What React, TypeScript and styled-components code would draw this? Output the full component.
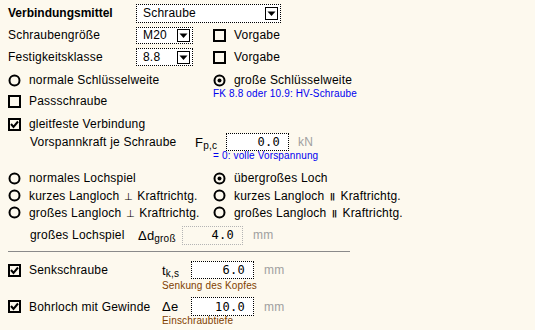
import React from "react";
import styled, { createGlobalStyle } from "styled-components";

const Global = createGlobalStyle`
  html, body { margin: 0; padding: 0; background: #fdf9ee; }
  body { width: 535px; height: 330px; overflow: hidden; }
`;

const Page = styled.div`
  display: flex;
  flex-direction: column;
  padding: 3px 8px 0 8px;
  font-family: "Liberation Sans", Arial, sans-serif;
  font-size: 12px;
  letter-spacing: 0.2px;
  color: #000;
  background: #fdf9ee;
  height: 330px;
  box-sizing: border-box;
`;

const Row = styled.div<{ $h: number; $mt?: number; $indent?: number }>`
  display: flex;
  align-items: center;
  height: ${(p) => p.$h}px;
  margin-top: ${(p) => p.$mt ?? 0}px;
  padding-left: ${(p) => p.$indent ?? 0}px;
  white-space: nowrap;
`;

const Split = styled.div<{ $h: number }>`
  display: grid;
  grid-template-columns: 205px 1fr;
  height: ${(p) => p.$h}px;
`;

const Cell = styled.div<{ $w: number }>`
  display: flex;
  align-items: center;
  width: ${(p) => p.$w}px;
  flex-shrink: 0;
`;

const Bold = styled.span`
  font-weight: bold;
  letter-spacing: 0;
`;

const SelectBox = styled.div<{ $w: number; $h: number }>`
  width: ${(p) => p.$w}px;
  height: ${(p) => p.$h}px;
  box-sizing: border-box;
  border: 1px dotted #000;
  background: #fff;
  display: flex;
  align-items: center;
  justify-content: space-between;
  padding: 0 2px 0 6px;
`;

const DropBtn = styled.svg`
  display: block;
  flex-shrink: 0;
`;

const Drop = () => (
  <DropBtn width="13" height="13" viewBox="0 0 13 13">
    <rect x="0.5" y="0.5" width="12" height="12" fill="#fff" stroke="#000" />
    <polygon points="2.5,4.5 10.5,4.5 6.5,9" fill="#000" />
  </DropBtn>
);

const OptionWrap = styled.label`
  display: flex;
  align-items: center;
  gap: 8px;
`;

const Mark = styled.svg`
  display: block;
  flex-shrink: 0;
`;

const CheckBox = ({ checked }: { checked?: boolean }) => (
  <Mark width="13" height="13" viewBox="0 0 13 13">
    <rect x="1" y="1" width="11" height="11" fill="none" stroke="#000" strokeWidth="2" />
    {checked && (
      <polyline points="3,6 5.5,9 10,3.5" fill="none" stroke="#000" strokeWidth="2" />
    )}
  </Mark>
);

const Radio = ({ checked }: { checked?: boolean }) => (
  <Mark width="13" height="13" viewBox="0 0 13 13">
    <circle cx="6.5" cy="6.5" r="5" fill="none" stroke="#000" strokeWidth="2" />
    {checked && <circle cx="6.5" cy="6.5" r="2" fill="#000" />}
  </Mark>
);

const Option = ({
  kind,
  checked,
  children,
}: {
  kind: "check" | "radio";
  checked?: boolean;
  children: React.ReactNode;
}) => (
  <OptionWrap>
    {kind === "check" ? <CheckBox checked={checked} /> : <Radio checked={checked} />}
    <span>{children}</span>
  </OptionWrap>
);

const MathSign = styled.span<{ $big?: boolean }>`
  display: inline-block;
  font-family: "DejaVu Sans", sans-serif;
  font-size: ${(p) => (p.$big ? 14 : 10)}px;
  line-height: 10px;
  letter-spacing: 0;
  margin: 0 1px;
  transform: ${(p) => (p.$big ? "scaleY(0.55) translateY(3px)" : "none")};
`;

const Note = styled.div<{ $color: string; $indent: number; $h: number; $mt?: number }>`
  font-size: 10px;
  letter-spacing: 0.15px;
  line-height: ${(p) => p.$h}px;
  height: ${(p) => p.$h}px;
  color: ${(p) => p.$color};
  padding-left: ${(p) => p.$indent}px;
  margin-top: ${(p) => p.$mt ?? 0}px;
  white-space: nowrap;
`;

const Field = styled.div<{ $w: number; $h: number; $disabled?: boolean }>`
  width: ${(p) => p.$w}px;
  height: ${(p) => p.$h}px;
  box-sizing: border-box;
  border: 1px dotted ${(p) => (p.$disabled ? "#b4b4b4" : "#000")};
  background: ${(p) => (p.$disabled ? "transparent" : "#fff")};
  font-family: "DejaVu Sans Mono", "Liberation Mono", monospace;
  font-size: 12px;
  letter-spacing: 0.3px;
  display: flex;
  align-items: center;
  justify-content: flex-end;
  padding-right: 8px;
  flex-shrink: 0;
`;

const Unit = styled.span<{ $ml: number }>`
  color: #a0a0a0;
  margin-left: ${(p) => p.$ml}px;
`;

const Sym = styled.span`
  font-size: 13px;
`;

const Sub = styled.sub`
  font-size: 10px;
  vertical-align: -2px;
  line-height: 0;
`;

const Rule = styled.div`
  width: 342px;
  height: 1px;
  background: #8a8a8a;
  margin-top: 6px;
`;

export default function App() {
  return (
    <>
      <Global />
      <Page>
        <Row $h={20}>
          <Cell $w={128}>
            <Bold>Verbindungsmittel</Bold>
          </Cell>
          <SelectBox $w={145} $h={19}>
            Schraube
            <Drop />
          </SelectBox>
        </Row>
        <Row $h={20} $mt={2}>
          <Cell $w={128}>Schraubengröße</Cell>
          <Cell $w={77}>
            <SelectBox $w={57} $h={17}>
              M20
              <Drop />
            </SelectBox>
          </Cell>
          <Option kind="check">Vorgabe</Option>
        </Row>
        <Row $h={20} $mt={2}>
          <Cell $w={128}>Festigkeitsklasse</Cell>
          <Cell $w={77}>
            <SelectBox $w={57} $h={18}>
              8.8
              <Drop />
            </SelectBox>
          </Cell>
          <Option kind="check">Vorgabe</Option>
        </Row>
        <Row $h={18} $mt={4}>
          <Cell $w={205}>
            <Option kind="radio">normale Schlüsselweite</Option>
          </Cell>
          <Option kind="radio" checked>
            große Schlüsselweite
          </Option>
        </Row>
        <Split $h={24}>
          <Row $h={24}>
            <Option kind="check">Passschraube</Option>
          </Row>
          <Note $color="#0000f0" $indent={0} $h={10}>
            FK 8.8 oder 10.9: HV-Schraube
          </Note>
        </Split>
        <Row $h={18} $mt={2}>
          <Option kind="check" checked>
            gleitfeste Verbindung
          </Option>
        </Row>
        <Row $h={18} $indent={22}>
          <Cell $w={165}>Vorspannkraft je Schraube</Cell>
          <Cell $w={31}>
            <Sym>
              F<Sub>p,c</Sub>
            </Sym>
          </Cell>
          <Field $w={63} $h={18}>
            0.0
          </Field>
          <Unit $ml={9}>kN</Unit>
        </Row>
        <Note $color="#0000f0" $indent={205} $h={10}>
          = 0: volle Vorspannung
        </Note>
        <Row $h={18} $mt={8}>
          <Cell $w={205}>
            <Option kind="radio">normales Lochspiel</Option>
          </Cell>
          <Option kind="radio" checked>
            übergroßes Loch
          </Option>
        </Row>
        <Row $h={17}>
          <Cell $w={205}>
            <Option kind="radio">
              kurzes Langloch <MathSign>⊥</MathSign> Kraftrichtg.
            </Option>
          </Cell>
          <Option kind="radio">
            kurzes Langloch <MathSign $big>∥</MathSign> Kraftrichtg.
          </Option>
        </Row>
        <Row $h={17}>
          <Cell $w={205}>
            <Option kind="radio">
              großes Langloch <MathSign>⊥</MathSign> Kraftrichtg.
            </Option>
          </Cell>
          <Option kind="radio">
            großes Langloch <MathSign $big>∥</MathSign> Kraftrichtg.
          </Option>
        </Row>
        <Row $h={20} $mt={4} $indent={22}>
          <Cell $w={108}>großes Lochspiel</Cell>
          <Cell $w={44}>
            <Sym>
              Δd<Sub>groß</Sub>
            </Sym>
          </Cell>
          <Field $w={61} $h={19} $disabled>
            4.0
          </Field>
          <Unit $ml={10}>mm</Unit>
        </Row>
        <Rule />
        <Row $h={18} $mt={9}>
          <Cell $w={154}>
            <Option kind="check" checked>
              Senkschraube
            </Option>
          </Cell>
          <Cell $w={29}>
            <Sym>
              t<Sub>k,s</Sub>
            </Sym>
          </Cell>
          <Field $w={63} $h={18}>
            6.0
          </Field>
          <Unit $ml={10}>mm</Unit>
        </Row>
        <Note $color="#804000" $indent={154} $h={12} $mt={1}>
          Senkung des Kopfes
        </Note>
        <Row $h={19} $mt={5}>
          <Cell $w={154}>
            <Option kind="check" checked>
              Bohrloch mit Gewinde
            </Option>
          </Cell>
          <Cell $w={29}>
            <Sym>Δe</Sym>
          </Cell>
          <Field $w={63} $h={19}>
            10.0
          </Field>
          <Unit $ml={10}>mm</Unit>
        </Row>
        <Note $color="#804000" $indent={154} $h={10}>
          Einschraubtiefe
        </Note>
      </Page>
    </>
  );
}
